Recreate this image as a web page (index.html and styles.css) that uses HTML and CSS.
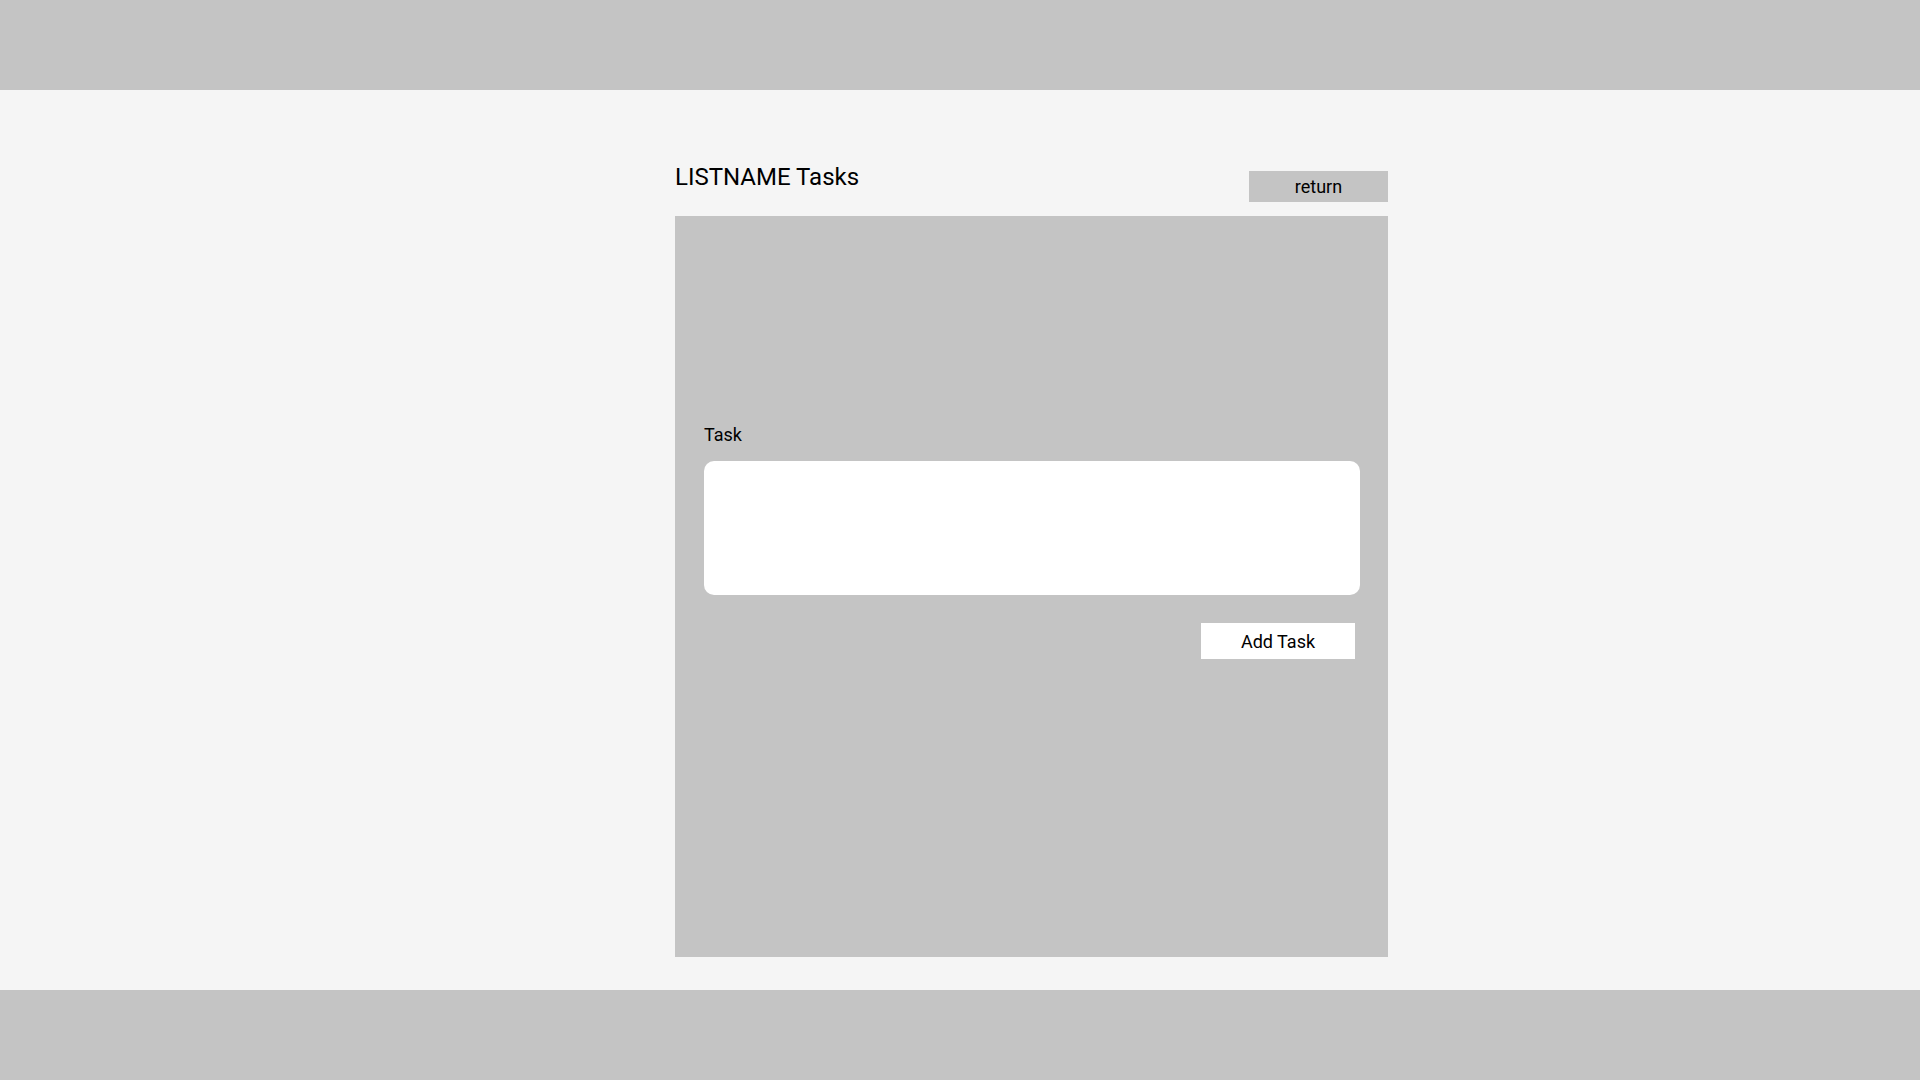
FILE: index.html
```html
<!DOCTYPE html>
<html>
<head>
<meta charset="utf-8">
<title>Tasks</title>
<link rel="stylesheet" href="styles.css">
</head>
<body>
<header class="topbar"></header>
<main class="main">
  <div class="container">
    <div class="title-row">
      <h1 class="title">LISTNAME Tasks</h1>
      <button class="return-btn">return</button>
    </div>
    <section class="panel">
      <label class="task-label" for="task">Task</label>
      <textarea id="task" class="task-input"></textarea>
      <div class="actions">
        <button class="add-btn">Add Task</button>
      </div>
    </section>
  </div>
</main>
<footer class="footer"></footer>
</body>
</html>
```
FILE: styles.css
```css
* { box-sizing: border-box; }
html, body {
  margin: 0;
  padding: 0;
  height: 100%;
}
body {
  background: #f5f5f5;
  font-family: Roboto, "Noto Sans", sans-serif;
  color: #000;
  display: flex;
  flex-direction: column;
  height: 1080px;
  overflow: hidden;
}
.topbar {
  height: 90px;
  background: #c4c4c4;
  flex: none;
}
.main {
  height: 900px;
  flex: none;
  padding-top: 73px;
}
.container {
  width: 713px;
  margin-left: 675px;
}
.title-row {
  display: flex;
  justify-content: space-between;
  align-items: flex-start;
  margin-bottom: 14px;
}
.title {
  margin: 0;
  font-size: 24px;
  font-weight: 400;
  line-height: 28px;
  height: 28px;
}
.return-btn {
  margin-top: 8px;
  width: 139px;
  height: 31px;
  border: none;
  background: #c4c4c4;
  font-family: Roboto, sans-serif;
  font-size: 18px;
  color: #000;
  padding: 0;
}
.panel {
  background: #c4c4c4;
  height: 741px;
  padding: 208px 28px 0 29px;
  display: flex;
  flex-direction: column;
}
.task-label {
  font-size: 18px;
  line-height: 21px;
  margin-bottom: 16px;
}
.task-input {
  width: 656px;
  height: 134px;
  border: none;
  border-radius: 10px;
  background: #fff;
  resize: none;
  margin: 0;
}
.actions {
  display: flex;
  justify-content: flex-end;
  padding-right: 5px;
  margin-top: 28px;
}
.add-btn {
  width: 154px;
  height: 36px;
  border: none;
  background: #fff;
  font-family: Roboto, sans-serif;
  font-size: 18px;
  color: #000;
  padding: 0;
}
.footer {
  height: 90px;
  background: #c4c4c4;
  flex: none;
}
```
